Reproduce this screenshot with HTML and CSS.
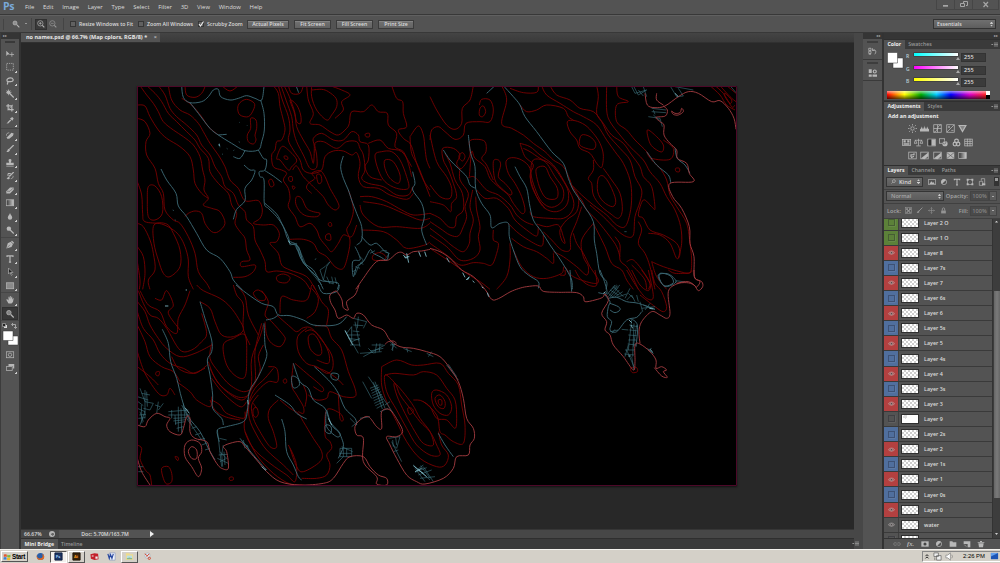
FILE: index.html
```html
<!DOCTYPE html>
<html lang="en">
<head>
<meta charset="utf-8">
<title>no names.psd</title>
<link rel="stylesheet" href="styles.css">
</head>
<body>
<svg class="defs" width="0" height="0">
  <defs>
    <symbol id="move" viewBox="0 0 12 12"><path class="f" d="M1 2v7l2-2h3z"/><path class="s" d="M8.5 4v6M5.5 7h6"/></symbol>
    <symbol id="marquee" viewBox="0 0 12 12"><rect class="s" x="1.500" y="1.500" width="9" height="9" stroke-dasharray="1.8 1.2"/></symbol>
    <symbol id="lasso" viewBox="0 0 12 12"><path class="s w" d="M3 8C0 4 4 2 7 2s5 4 1 5-5-1-5 1 0 2-1 3"/></symbol>
    <symbol id="wand" viewBox="0 0 12 12"><circle class="f" cx="4" cy="4" r="2.3"/><path class="s" d="M4 0v8M0 4h8M1.500 1.500l5 5M6.500 1.500l-5 5"/><path class="s w" d="M5 5l6 6"/></symbol>
    <symbol id="crop" viewBox="0 0 12 12"><path class="s w" d="M3.500 1v7.500H11M1 3.500h7.500V11"/><path class="s" d="M3 9l7-7"/></symbol>
    <symbol id="dropper" viewBox="0 0 12 12"><path class="s" d="M2 10l5-5"/><path class="f" d="M6 3l3 3 2-3-2-2z"/><path class="s w" d="M3 9l4-4"/></symbol>
    <symbol id="heal" viewBox="0 0 12 12"><path class="f" d="M2 8l6-6 3 1-1 3-5 4H2z"/><path class="s" d="M1 6c0-3 2-4 4-4"/></symbol>
    <symbol id="brush" viewBox="0 0 12 12"><path class="s w" d="M5 7l6-6"/><path class="f" d="M1 10c2 0 1-3 3-4l2 2c-1 2-3 3-5 2z"/></symbol>
    <symbol id="stamp" viewBox="0 0 12 12"><path class="f" d="M4 3a2 2 0 0 1 4 0L7 6h4v3H1V6h4zM1 10h10v1H1z"/></symbol>
    <symbol id="history" viewBox="0 0 12 12"><path class="s w" d="M5 7l6-6M3 3h4M2 5h3"/><path class="f" d="M1 10c2 0 1-2 3-3l2 2c-1 2-3 2-5 1z"/><path class="s" d="M7 10c2 0 4-2 3-4"/></symbol>
    <symbol id="eraser" viewBox="0 0 12 12"><path class="f" d="M1 8l5-5h5v3l-5 5H1z"/><path class="d" d="M2 8h4l4-4"/></symbol>
    <symbol id="gradient" viewBox="0 0 12 12"><rect fill="url(#gg)" stroke="#b5b5b5" x="1" y="2" width="10" height="8"/></symbol>
    <symbol id="drop" viewBox="0 0 12 12"><path class="f" d="M6 1c1 3 3 4 3 6a3 3 0 0 1-6 0c0-2 2-3 3-6z"/></symbol>
    <symbol id="dodge" viewBox="0 0 12 12"><circle class="f" cx="4.500" cy="4.500" r="3"/><path class="s w" d="M6 6l5 5"/></symbol>
    <symbol id="pen" viewBox="0 0 12 12"><path class="f" d="M1 11l2-7 4-2 3 3-2 4z"/><path class="d" d="M2 10l4-4"/><path class="s w" d="M8 1l3 3"/></symbol>
    <symbol id="type" viewBox="0 0 12 12"><path class="s w" d="M2 3.500V2h8v1.500M6 2v9M4.500 10.500h3"/></symbol>
    <symbol id="arrow" viewBox="0 0 12 12"><path fill="#222" stroke="#aaa" d="M4 1v8l2-2 2 4 1-1-2-3h3z"/></symbol>
    <symbol id="rect" viewBox="0 0 12 12"><rect fill="#8a8a8a" stroke="#b5b5b5" x="1" y="2" width="10" height="8"/></symbol>
    <symbol id="hand" viewBox="0 0 12 12"><path class="f" d="M4 11L1 6l1-1 2 2V2h1v3l1-4h1v4l1-3h1v4l1-2h1L10 9l-2 2z"/></symbol>
    <symbol id="zoom" viewBox="0 0 12 12"><circle class="f" cx="4.500" cy="4.500" r="3" fill-opacity=".6"/><circle class="s" cx="4.500" cy="4.500" r="3"/><path class="s w" d="M7 7l4 4"/></symbol>
    <symbol id="zin" viewBox="0 0 12 12"><circle class="s" cx="5" cy="5" r="4"/><path class="s" d="M3 5h4M5 3v4"/><path class="s w" d="M8 8l3 3"/></symbol>
    <symbol id="zout" viewBox="0 0 12 12"><circle class="s" cx="5" cy="5" r="4"/><path class="s" d="M3 5h4"/><path class="s w" d="M8 8l3 3"/></symbol>
    <symbol id="mask" viewBox="0 0 12 12"><rect class="s" x="1" y="2" width="10" height="8"/><circle class="s" cx="6" cy="6" r="2.300"/></symbol>
    <symbol id="screen" viewBox="0 0 12 12"><path class="f" d="M4 1h8v6h-2V4H4z"/><rect class="s" x="1" y="4.500" width="8" height="5"/></symbol>
    <symbol id="eye" viewBox="0 0 14 10"><path fill="none" stroke="#bdb5b5" stroke-width="1.200" d="M1 6C3 1 11 1 13 6 10 9 4 9 1 6z"/><circle fill="#3a3030" stroke="#c8c8c8" cx="7" cy="5.500" r="2"/></symbol>
    <symbol id="sun" viewBox="0 0 12 12"><circle class="s" cx="6" cy="6" r="2.300"/><path class="s" d="M6 0v2M6 10v2M0 6h2M10 6h2M1.500 1.500L3 3M9 9l1.500 1.500M10.500 1.500L9 3M1.500 10.500L3 9"/></symbol>
    <symbol id="levels" viewBox="0 0 12 12"><path class="f" d="M0 10V6l1 1 1-4 1 4 1-3 1 3 1-5 1 5 1-3 1 3 1-4 1 4 1-1v4z"/></symbol>
    <symbol id="curves" viewBox="0 0 12 12"><rect class="s" x="1" y="1" width="10" height="10"/><path class="s" d="M1 11c6-1 4-9 10-10M1 6h10M6 1v10"/></symbol>
    <symbol id="expo" viewBox="0 0 12 12"><rect class="s" x="1" y="1" width="10" height="10"/><path class="s" d="M1 11L11 1M2.500 4h3M4 2.500v3M7 8.500h3"/></symbol>
    <symbol id="vib" viewBox="0 0 12 12"><path class="f" fill-opacity=".5" d="M1.500 2h9L6 10z"/><path class="s w" d="M1.500 2h9L6 10z"/></symbol>
    <symbol id="hue" viewBox="0 0 12 12"><rect class="s" x="0.500" y="2" width="11" height="8"/><path class="f" d="M2 3h3v3H2zM7 3h3v3H7zM2 7h8v2H2z"/></symbol>
    <symbol id="balance" viewBox="0 0 12 12"><path class="s" d="M6 1v9M3 10.500h6M1 3h10M0 7l2-4 2 4zM8 7l2-4 2 4z"/></symbol>
    <symbol id="bw" viewBox="0 0 12 12"><rect class="s" x="1" y="1.500" width="10" height="9"/><path fill="#333" d="M2 2h4v8H2z"/><path class="f" d="M6 2h5v8H6z"/></symbol>
    <symbol id="photo" viewBox="0 0 12 12"><rect class="s" x="0.500" y="1" width="7" height="6"/><circle class="f" cx="8" cy="7.500" r="3.500"/><circle class="d" cx="7" cy="6" r="2"/></symbol>
    <symbol id="mixer" viewBox="0 0 12 12"><circle class="s w" cx="6" cy="4" r="2.500"/><circle class="s w" cx="4" cy="8" r="2.500"/><circle class="s w" cx="8" cy="8" r="2.500"/></symbol>
    <symbol id="grid" viewBox="0 0 12 12"><rect class="s" x="1" y="1.500" width="10" height="9"/><path class="s" d="M1 4.500h10M1 7.500h10M4.500 1v10M8 1v10"/></symbol>
    <symbol id="invert" viewBox="0 0 12 12"><rect class="s" x="1" y="1.500" width="10" height="9"/><path class="s w" d="M4 8V5h4V3M4 9l4-2"/></symbol>
    <symbol id="diag" viewBox="0 0 12 12"><rect class="s" x="1" y="1.500" width="10" height="9"/><path class="f" d="M1 10L11 2v5l-5 4z"/></symbol>
    <symbol id="sel" viewBox="0 0 12 12"><rect class="f" x="1" y="1.500" width="10" height="9"/><path class="d" d="M1 2l5 4 5-4M1 10l5-4 5 4"/></symbol>
    <symbol id="pic" viewBox="0 0 12 12"><rect class="s" x="1" y="2" width="10" height="8"/><path class="f" d="M2 9l3-4 2 2 1-1 2 3z"/></symbol>
    <symbol id="half" viewBox="0 0 12 12"><circle class="s" cx="6" cy="6" r="4"/><path class="f" d="M3 9A4 4 0 0 1 9 3z"/></symbol>
    <symbol id="frame" viewBox="0 0 12 12"><rect class="s" x="2.500" y="2.500" width="7" height="7"/><path class="f" d="M1 1h3v3H1zM8 1h3v3H8zM1 8h3v3H1zM8 8h3v3H8z"/></symbol>
    <symbol id="smart" viewBox="0 0 12 12"><path class="s" d="M2 5h5v6H2zM5 4V1h5v7H8"/><path class="f" d="M6 8h5v3H6z"/></symbol>
    <symbol id="checker" viewBox="0 0 12 12"><rect class="s" x="1" y="1" width="10" height="10"/><path class="f" d="M2 2h3v3H2zM7 2h3v3H7zM4 5h4v3H4zM2 8h3v2H2zM7 8h3v2H7z"/></symbol>
    <symbol id="cross" viewBox="0 0 12 12"><path class="s" d="M6 1v10M1 6h10M4.500 2.500L6 1l1.500 1.500M4.500 9.500L6 11l1.500-1.500M2.500 4.500L1 6l1.500 1.500M9.500 4.500L11 6 9.500 7.500"/></symbol>
    <symbol id="lock" viewBox="0 0 12 12"><path class="f" d="M2 6h8v5H2z"/><path class="s w" d="M4 6V3c0-2 4-2 4 0v3"/></symbol>
    <symbol id="link" viewBox="0 0 12 12"><path class="s" d="M5 4H3a2 2 0 0 0 0 4h2M7 4h2a2 2 0 0 1 0 4H7M4 6h4"/></symbol>
    <symbol id="addmask" viewBox="0 0 12 12"><rect class="f" x="0.500" y="2" width="11" height="8"/><circle fill="#444" cx="6" cy="6" r="2.300"/></symbol>
    <symbol id="folder" viewBox="0 0 12 12"><path class="f" d="M1 2h4l1 1.500h5V10H1z"/></symbol>
    <symbol id="page" viewBox="0 0 12 12"><path class="f" d="M1 2h10v9H7V6H1z"/><path class="s" d="M2 7l3 3"/></symbol>
    <symbol id="trash" viewBox="0 0 12 12"><path class="f" d="M2 5h8l-1 6H3zM1 3h10v1H1zM4.500 1.500h3V3h-3z"/></symbol>
    <symbol id="flyout" viewBox="0 0 12 8"><path class="f" d="M0 3h4L2 5z"/><path class="s" d="M5 1.500h7M5 4h7M5 6.500h7"/></symbol>
    <linearGradient id="gg"><stop stop-color="#333"/><stop offset="1" stop-color="#ccc"/></linearGradient>
  </defs>
</svg>

<div class="app">
  <header class="menubar">
    <div class="logo">Ps</div>
    <nav class="menus"><span>File</span><span>Edit</span><span>Image</span><span>Layer</span><span>Type</span><span>Select</span><span>Filter</span><span>3D</span><span>View</span><span>Window</span><span>Help</span></nav>
    <div class="winbtns">
      <svg viewBox="0 0 15 9"><path fill="#a5a5a5" d="M5 5h5v1.700H5z"/></svg>
      <svg viewBox="0 0 15 9"><path fill="none" stroke="#a5a5a5" d="M7.500 3V1.500h4v4H10M4.500 3.500h4v3h-4z"/></svg>
      <svg class="close" viewBox="0 0 24 9"><path fill="none" stroke="#a5a5a5" stroke-width="1.200" d="M10 2l4.500 5M14.500 2L10 7"/></svg>
    </div>
  </header>

  <div class="options">
    <i class="grip"></i>
    <svg class="ic cur"><use href="#zoom"/></svg><i class="caret"></i><i class="sep"></i>
    <span class="zbtn on"><svg class="ic"><use href="#zin"/></svg></span>
    <span class="zbtn off"><svg class="ic"><use href="#zout"/></svg></span><i class="sep s2"></i>
    <label class="chk c1"><i></i><span>Resize Windows to Fit</span></label>
    <label class="chk c2"><i></i><span>Zoom All Windows</span></label>
    <label class="chk c3"><i><svg viewBox="0 0 6 6"><path fill="none" stroke="#eee" stroke-width="1.100" d="M1 3l1.500 2L5.500.5"/></svg></i><span>Scrubby Zoom</span></label>
    <span class="btn b1">Actual Pixels</span><span class="btn b2">Fit Screen</span><span class="btn b3">Fill Screen</span><span class="btn b4">Print Size</span>
    <span class="workspace">Essentials<b class="updn"></b></span>
  </div>

  <main class="work">
    <aside class="tools">
      <div class="striphead">▸▸</div>
      <div class="gripbar"></div>
      <div class="group"><svg class="plain"><use href="#move"/></svg><svg><use href="#marquee"/></svg><svg><use href="#lasso"/></svg><svg><use href="#wand"/></svg><svg><use href="#crop"/></svg><svg><use href="#dropper"/></svg></div>
      <div class="group"><svg><use href="#heal"/></svg><svg><use href="#brush"/></svg><svg><use href="#stamp"/></svg><svg><use href="#history"/></svg><svg><use href="#eraser"/></svg><svg><use href="#gradient"/></svg><svg><use href="#drop"/></svg><svg><use href="#dodge"/></svg></div>
      <div class="group"><svg><use href="#pen"/></svg><svg><use href="#type"/></svg><svg><use href="#arrow"/></svg><svg><use href="#rect"/></svg></div>
      <div class="group"><svg><use href="#hand"/></svg><svg class="plain on"><use href="#zoom"/></svg></div>
      <svg class="colors" viewBox="0 0 18 26"><path fill="#ddd" d="M2 3h3v3H2z"/><path fill="#222" stroke="#aaa" stroke-width=".7" d="M.5 1.500h3v3h-3z"/><path fill="none" stroke="#bbb" stroke-width=".8" d="M10 2.500h3.500V6M11 1l-1.500 1.500L11 4M12 5l1.500 1.500L15 5"/><path fill="#fff" stroke="#333" stroke-width=".5" d="M6 14h10v9H6z"/><path fill="#fff" stroke="#333" stroke-width=".5" d="M1 9h10v9.500H1z"/></svg>
      <div class="group last"><svg class="plain"><use href="#mask"/></svg><svg><use href="#screen"/></svg></div>
    </aside>

    <section class="doc">
      <div class="tabs"><div class="tab">no names.psd @ 66.7% (Map cplors, RGB/8) *<span>×</span></div></div>
      <div class="canvas">
        <svg id="map" class="map" viewBox="137 86 600 400"></svg>
      </div>
      <div class="status"><span class="pct">66.67%</span><i class="globe"></i><span class="size">Doc: 5.70M/163.7M</span><i class="play"></i></div>
      <div class="bottabs"><span class="on">Mini Bridge</span><span>Timeline</span><svg class="fly"><use href="#flyout"/></svg></div>
    </section>

    <aside class="icondock">
      <div class="striphead r">◂◂</div>
      <div class="dockcell"><i></i><svg viewBox="0 0 12 12"><path class="s" d="M1 1h3v3H1zM1 5h3v3H1zM1 9h3M6 4c4-3 6 2 3 5M6 1v3h3"/></svg></div>
      <div class="dockcell"><i></i><svg viewBox="0 0 12 12"><path class="f" d="M1 1h4v5H1zM1 8h4v3H1zM6 8h6v3H6z"/><circle class="s w" cx="9" cy="4" r="2"/></svg></div>
      <div class="dockrest"></div>
    </aside>

    <aside class="panels">
      <div class="striphead r">▸▸</div>
      <div class="ptabs"><span class="on">Color</span><span>Swatches</span><svg class="fly"><use href="#flyout"/></svg></div>
      <div class="color">
        <div class="crow">
          <svg class="fgbg" viewBox="0 0 18 18"><path fill="#fff" stroke="#333" stroke-width=".5" d="M6 6h10v10H6z"/><path fill="#fff" stroke="#333" stroke-width=".5" d="M.5.5h10V11H.5z"/></svg>
          <div class="sliders">
            <div><b>R</b><i class="sl c"></i><em>255</em></div>
            <div><b>G</b><i class="sl m"></i><em>255</em></div>
            <div><b>B</b><i class="sl y"></i><em>255</em></div>
          </div>
        </div>
        <div class="spectrum"></div>
      </div>
      <div class="ptabs"><span class="on">Adjustments</span><span>Styles</span><svg class="fly"><use href="#flyout"/></svg></div>
      <div class="adjust">
        <div class="title">Add an adjustment</div>
        <div class="icons"><svg><use href="#sun"/></svg><svg><use href="#levels"/></svg><svg><use href="#curves"/></svg><svg><use href="#expo"/></svg><svg><use href="#vib"/></svg></div>
        <div class="icons"><svg><use href="#hue"/></svg><svg><use href="#balance"/></svg><svg><use href="#bw"/></svg><svg><use href="#photo"/></svg><svg><use href="#mixer"/></svg><svg><use href="#grid"/></svg></div>
        <div class="icons"><svg><use href="#invert"/></svg><svg><use href="#diag"/></svg><svg><use href="#diag"/></svg><svg><use href="#sel"/></svg><svg><use href="#gradient"/></svg></div>
      </div>
      <div class="ptabs lay"><span class="on">Layers</span><span>Channels</span><span>Paths</span><svg class="fly"><use href="#flyout"/></svg></div>
      <div class="lrow filter"><span class="drop kind"><svg viewBox="0 0 12 12"><circle class="s w" cx="7" cy="5" r="3.500"/><path class="s w" d="M4.500 7.500L1 11"/></svg>Kind<b class="updn"></b></span><svg><use href="#pic"/></svg><svg><use href="#half"/></svg><svg><use href="#type"/></svg><svg><use href="#frame"/></svg><svg><use href="#smart"/></svg><i class="switch"></i></div>
      <div class="lrow dim"><span class="drop mode">Normal<b class="updn"></b></span><span class="lab">Opacity:</span><span class="num">100%</span><span class="dd"></span></div>
      <div class="lrow dim"><span class="lk">Lock:</span><svg><use href="#checker"/></svg><svg><use href="#brush"/></svg><svg><use href="#cross"/></svg><svg><use href="#lock"/></svg><span class="lab">Fill:</span><span class="num">100%</span><span class="dd"></span></div>
      <div class="layers">
        <div class="list" id="layers"></div>
        <div class="scroll"><i class="up"></i><div class="thumb"></div><i class="dn"></i></div>
      </div>
      <div class="lfoot"><svg class="dimmed"><use href="#link"/></svg><span class="fx">fx.</span><svg><use href="#addmask"/></svg><svg><use href="#half"/></svg><svg><use href="#folder"/></svg><svg><use href="#page"/></svg><svg><use href="#trash"/></svg></div>
    </aside>
  </main>

  <footer class="taskbar">
    <div class="start"><svg viewBox="0 0 10 9"><path fill="#e2562c" d="M1 1.500q2-1 3.700 0V4.500q-2-1-3.700 0z"/><path fill="#7fb83c" d="M5.300 1.800q2 1 4 0V4.700q-2 1-4 0z"/><path fill="#3e80cf" d="M.7 5q2-1 3.700 0V8q-2-1-3.700 0z"/><path fill="#f3b92b" d="M5 5.300q2 1 4 0V8.100q-2 1-4 0z"/></svg>Start</div>
    <div class="task"><svg viewBox="0 0 10 10"><circle cx="5" cy="5" r="4" fill="#2a5fa8"/><path fill="#e66a1f" d="M1 3c0 5 4 5 6 3 1-1 0-3 0-4 4 3 2 7-2 7S0 6 1 3z"/></svg></div>
    <div class="task active"><svg viewBox="0 0 10 10"><path fill="#1b3563" stroke="#0d1c3b" d="M1 1h8v8H1z"/><text x="2" y="7" fill="#9cc8f5" class="lt">Ps</text></svg></div>
    <div class="task raised"><svg viewBox="0 0 10 10"><path fill="#38220a" stroke="#1d1205" d="M1 1h8v8H1z"/><text x="2.200" y="7" fill="#f79a1e" class="lt">Ai</text></svg></div>
    <div class="task"><svg viewBox="0 0 10 10"><path fill="#c3202b" d="M.5 2.500L5 1.500l4 .5.500 6L5 9 1 7.500z"/><path fill="#eee" d="M6 5h2.500v2.500H6zM2 4h2v1H2z"/></svg></div>
    <div class="task"><svg viewBox="0 0 10 10"><path fill="#f2f5fb" stroke="#7188b9" stroke-width=".6" d="M3 1h6v8H3z"/><path fill="none" stroke="#2848a0" stroke-width="1.300" d="M1 2l1.500 5L4 3l1.500 4L7 2"/></svg></div>
    <div class="task raised"><svg viewBox="0 0 10 10"><path fill="#f0dc8a" d="M1 1.500h4v1h4V9H1z"/><path fill="#b8dfe8" d="M2 4h6v4H2z"/><path fill="#8ab88e" d="M2 7l3-1 3 1v1H2z"/></svg></div>
    <div class="task"><svg viewBox="0 0 10 10"><circle cx="5" cy="4" r="3" fill="#dfe8ef" stroke="#8fa4b5" stroke-width=".5"/><path fill="none" stroke="#d0442c" stroke-width="1.100" d="M2 2l3 2.500M7 2L4 5"/><circle cx="7" cy="7" r="1.300" fill="none" stroke="#d0442c"/></svg></div>
    <div class="tray">
      <svg viewBox="0 0 8 10"><path fill="none" stroke="#222" stroke-width="1.300" d="M2 4.500l2-2 2 2M2 7.500l2-2 2 2"/></svg>
      <svg viewBox="0 0 10 10"><path fill="#eee" stroke="#555" stroke-width=".7" d="M1 1h5v4H1zM4 4h5v5H4zM2 6v3"/></svg>
      <svg viewBox="0 0 10 10"><path fill="#fff" stroke="#777" stroke-width=".7" d="M1 3.500h2l3-2.500v8L3 6.500H1z"/><path fill="none" stroke="#777" stroke-width=".7" d="M7.500 3q1.500 2 0 4"/></svg>
      <span>2:26 PM</span>
      <svg class="desk" viewBox="0 0 10 10"><path fill="#1c55b5" d="M1 1h8v7H1z"/><path fill="#62a0ee" d="M1 1h8L1 5z"/></svg>
    </div>
  </footer>
</div>
<script src="map.js"></script>
</body>
</html>
```
FILE: styles.css
```css
* { box-sizing: border-box; }
html, body { margin: 0; }
body { width: 1000px; height: 563px; overflow: hidden; background: #535353; font: 5.6px/8px "Open Sans", "Noto Sans", sans-serif; color: #dcdcdc; }
i, em { font-style: normal; }
.defs { position: absolute; }
.s { fill: none; stroke: #b8b8b8; stroke-width: 1; }
.s.w { stroke-width: 1.600; }
.f { fill: #b8b8b8; }
.d { fill: none; stroke: #555; stroke-width: .8; }
.app { display: flex; flex-direction: column; width: 1000px; height: 563px; }

.menubar { display: flex; height: 15px; background: #535353; border-bottom: 1px solid #383838; }
.logo { width: 25px; padding: 0 0 0 3px; font: bold 10.500px/13px "Open Sans", sans-serif; color: #79a8d8; letter-spacing: -.3px; }
.menus { display: flex; gap: 8.700px; font-size: 5.900px; line-height: 14.500px; flex: 1; }
.winbtns { display: flex; height: 10px; margin-right: 1px; border: 1px solid #464646; border-top: 0; }
.winbtns svg { width: 18px; height: 9px; border-right: 1px solid #464646; }
.winbtns .close { width: 25px; border: 0; }

.options { display: flex; align-items: center; height: 18px; background: #535353; border-top: 1px solid #606060; border-bottom: 1px solid #383838; font-weight: 600; font-size: 5.200px; }
.grip { width: 1px; height: 11px; margin-left: 3px; background: #444; }
.ic { width: 8px; height: 8px; }
.cur { margin-left: 8px; }
.caret { margin-left: 5px; border: 1.500px solid transparent; border-top-color: #ddd; }
.sep { width: 1px; height: 12px; margin: 0 3px 0 4px; background: #444; }
.sep.s2 { margin: 0 6px 0 4px; }
.zbtn { display: grid; place-items: center; width: 12px; height: 11px; }
.zbtn.on { background: #3a3a3a; border: 1px solid #303030; }
.zbtn.off { opacity: .7; }
.chk { display: flex; align-items: center; gap: 3px; white-space: nowrap; }
.chk i { display: grid; width: 6px; height: 6px; border: 1px solid #363636; background: #616161; }
.chk svg { width: 6px; height: 6px; margin: -1px; }
.c1 { width: 68px; } .c2 { width: 60px; } .c3 { width: 49px; }
.btn { display: grid; place-items: center; height: 9px; margin-right: 5px; border: 1px solid #3b3b3b; background: linear-gradient(#727272, #626262); box-shadow: inset 0 1px #828282; line-height: 7px; }
.b1 { width: 42px; } .b2, .b3 { width: 37px; } .b4 { width: 36px; }
.workspace { display: flex; align-items: center; justify-content: space-between; width: 63px; height: 10px; margin: 0 4px 0 auto; padding: 0 2px 0 3px; border: 1px solid #333; background: linear-gradient(#707070, #5d5d5d); font-weight: 600; }
.updn { width: 3px; height: 5px; background: linear-gradient(#ccc 0 2px, transparent 2px 3px, #ccc 3px); clip-path: polygon(50% 0, 100% 38%, 100% 62%, 50% 100%, 0 62%, 0 38%); }

.work { display: flex; height: 516px; }
.striphead { flex: none; height: 6px; padding-left: 2px; background: #353535; color: #aaa; font: 4px/6px "DejaVu Sans", sans-serif; }
.striphead.r { text-align: right; padding-right: 2px; }
.tools { width: 21px; background: #535353; border-left: 1px solid #3c3c3c; border-right: 2px solid #333; }
.gripbar { width: 10px; height: 2px; margin: 2px 0 3.500px 4px; background: #393939; }
.group { display: flex; flex-direction: column; border-bottom: 1px solid #464646; margin-bottom: .3px; }
.group svg { width: 16px; height: 13.500px; margin: 0 1px; padding: 2.300px 3.500px; background: linear-gradient(135deg, transparent 50%, #ccc 50%) 13px 10.500px / 2px 2px no-repeat; }
.group svg.plain { background: none; }
.group svg.on { background: #383838; outline: 1px solid #303030; outline-offset: -1px; }
.group.last { border: 0; }
.colors { display: block; width: 18px; height: 26px; margin: 0 0 0 .5px; }

.doc { display: flex; flex-direction: column; width: 842px; border-right: 9px solid #474747; }
.tabs { height: 10px; background: linear-gradient(#444, #3a3a3a); border-bottom: 1px solid #303030; }
.tab { display: flex; justify-content: space-between; width: 139px; height: 9px; padding: 0 3px 0 5px; background: #535353; font-size: 5.500px; line-height: 9.500px; font-weight: 700; color: #e6e6e6; }
.tab span { color: #bbb; }
.canvas { flex: 1; padding: 43px 0 0 116px; background: #282828; }
.map { display: block; width: 600px; height: 400px; background: #000; box-shadow: 0 1px 2px #111; }
.map g { fill: none; stroke-width: 1; stroke-linejoin: round; }
.contour { stroke: #740000; }
.coast { stroke: #a03a3e; }
.river { stroke: #3c6874; }
.street { stroke: #3e7480; }
.glow { stroke: #7ab0bc; }
.status { display: flex; align-items: center; height: 9px; background: #474747; border-top: 1px solid #363636; font-weight: 600; font-size: 5.200px; }
.pct { width: 28px; padding-left: 3px; }
.globe { width: 6px; height: 6px; border-radius: 50%; background: radial-gradient(circle at 60% 55%, #666 22%, #b5b5b5 32%); }
.size { width: 92px; height: 8px; margin-left: 4px; text-align: center; background: #535353; }
.play { width: 4px; height: 6px; margin-left: -1px; background: #eee; clip-path: polygon(0 0, 100% 50%, 0 100%); }
.bottabs, .ptabs { display: flex; height: 11px; background: #3a3a3a; border-top: 1px solid #2f2f2f; font-size: 5.200px; line-height: 10px; font-weight: 600; color: #999; }
.bottabs span, .ptabs span { padding: 0 3.500px; }
.bottabs .on, .ptabs .on { background: #535353; color: #eee; font-weight: 700; }
.bottabs .fly { margin-right: -5px; }
.fly { width: 7px; height: 5px; margin: 2px 2px 0 auto; }

.icondock { display: flex; flex-direction: column; width: 21px; border-right: 2px solid #333; }
.dockcell { height: 21px; padding-top: 1px; border-bottom: 1px solid #3a3a3a; background: #535353; }
.dockcell i { display: block; width: 11px; height: 2px; margin: 1px 0 0 4px; background: #3d3d3d; }
.dockcell svg { display: block; width: 9px; height: 10px; margin: 4px 0 0 5px; }
.dockrest { flex: 1; background: #535353; }

.panels { display: flex; flex-direction: column; width: 116px; }
.panels .ptabs { flex: none; height: 10px; line-height: 9px; }
.color { height: 52px; padding: 3px 3px 0; border-bottom: 1px solid #3a3a3a; }
.crow { display: flex; height: 39px; }
.fgbg { width: 18px; height: 18px; }
.sliders { display: grid; height: 36px; margin-left: 1px; gap: 3.500px; align-content: start; }
.sliders div { display: flex; height: 9px; }
.sliders b { width: 8px; padding-top: 1px; font-size: 5px; line-height: 7px; font-weight: 600; color: #b9cdd4; }
.sl { width: 44px; height: 3px; margin: 1px 3px 0 0; box-shadow: 0 0 0 .5px #333; position: relative; }
.sl::after { content: ""; position: absolute; right: -2px; top: 4px; border: 2px solid transparent; border-top: 0; border-bottom: 3px solid #aaa; }
.sl.c { background: linear-gradient(90deg, #0ff, #fff); } .sl.m { background: linear-gradient(90deg, #f0f, #fff); } .sl.y { background: linear-gradient(90deg, #ff0, #fff); }
.sliders em { width: 25px; height: 9px; margin-top: 1px; padding-left: 2px; background: #3b3b3b; border: 1px solid #333; line-height: 7.500px; font-weight: 600; }
.spectrum { width: 103px; height: 8px; background: linear-gradient(#fff 50%, #000 50%) 100% 0 / 4px 8px no-repeat, linear-gradient(rgba(255,255,255,.55), transparent 45%, rgba(0,0,0,.65)), linear-gradient(90deg, #f00, #ff0 17%, #0a0 33%, #0cf 48%, #00f 62%, #d0c 80%, #f22 96%); }
.adjust { height: 54px; display: flex; flex-direction: column; align-items: center; gap: 5.700px; }
.adjust .title { width: 100%; height: 7px; padding: 1px 4px 0; font-weight: 700; font-size: 5.300px; color: #eee; }
.icons { display: flex; gap: 3.600px; height: 8.200px; margin-right: 9px; }
.icons svg { width: 9px; height: 9px; }
.lrow { display: flex; align-items: center; flex: none; height: 14.500px; border-bottom: 1px solid #404040; font-weight: 600; }
.drop { display: flex; align-items: center; height: 10px; padding: 0 2px 0 4px; margin-left: 2px; border: 1px solid #353535; background: linear-gradient(#696969, #5c5c5c); line-height: 8px; }
.drop .updn { margin-left: auto; }
.kind { width: 37px; }
.filter .kind svg { width: 5px; height: 5px; margin: 0 3px 0 0; }
.mode { width: 58px; }
.filter svg { width: 8px; height: 8px; margin-left: 4.700px; }
.switch { width: 5px; height: 9px; margin-left: 8px; background: linear-gradient(#999 40%, #333 40%); border: 1px solid #333; }
.dim { color: #a6a6a6; }
.dim svg { width: 7px; height: 7px; margin-left: 4.700px; opacity: .65; }
.lk { margin-left: 3px; width: 13px; }
.lab { margin-left: auto; margin-right: 2px; }
.num { width: 19px; height: 10px; border: 1px solid #444; background: #4a4a4a; text-align: center; color: #858585; line-height: 8px; }
.dd { width: 8px; height: 10px; margin-right: 3px; border: 1px solid #444; background: #5b5b5b linear-gradient(#aaa, #aaa) 50% 50% / 2px 1px no-repeat; }
.layers { display: flex; flex: 1; min-height: 0; }
.list { flex: 1; overflow: hidden; }
.layer { display: flex; align-items: center; height: 15.120px; border-bottom: 1px solid #3a3a3a; font-weight: 600; font-size: 5.400px; }
.layer:first-child { margin-top: -3px; }
.vis { display: grid; place-items: center; width: 15px; height: 100%; border-right: 1px solid #3f3f3f; }
.vis svg { width: 7px; height: 5px; }
.vis i { width: 7px; height: 7px; border: 1px solid rgba(30,30,40,.35); box-shadow: .5px .5px rgba(255,255,255,.15); }
.red { background: #b34040; } .blue { background: #506f9e; } .green { background: #5c8139; }
.pv { width: 18px; height: 10px; margin: 0 5px 0 2px; border: 1px solid #303030; background: repeating-conic-gradient(#cfcfcf 0 25%, #fff 0 50%) 0 0 / 4px 4px; }
.pv.art { background: radial-gradient(circle at 20% 20%, #ddd 0 2px, transparent 2px), #fff; }
.scroll { display: flex; flex-direction: column; align-items: center; width: 8px; background: #3d3d3d; border-left: 1px solid #333; }
.scroll .thumb { width: 6px; height: 207px; margin-top: 68px; background: linear-gradient(90deg, #666, #7a7a7a, #666); }
.scroll i { width: 3px; height: 2px; background: #ccc; }
.scroll .up { clip-path: polygon(50% 0, 100% 100%, 0 100%); margin-top: 2px; }
.scroll .dn { clip-path: polygon(0 0, 100% 0, 50% 100%); margin: auto 0 3px; }
.lfoot { display: flex; align-items: center; flex: none; gap: 6px; height: 11px; padding-left: 9px; border-top: 1px solid #333; }
.lfoot svg { width: 8px; height: 8px; }
.dimmed { opacity: .5; }
.fx { width: 8px; font: italic bold 6.500px/8px "Liberation Serif", serif; color: #bbb; }

.taskbar { display: flex; align-items: center; height: 14px; background: #d4d0c8; border-top: 1px solid #f4f2ee; color: #000; }
.start { display: flex; align-items: center; gap: 1px; width: 27px; height: 11px; margin: 0 4.500px 0 1px; padding-left: 1px; border: 1px solid #fff; border-right-color: #555; border-bottom-color: #555; font: bold 6.300px/9px "Liberation Sans", sans-serif; letter-spacing: -.25px; }
.start svg { width: 8px; height: 8px; flex: none; }
.task { display: grid; place-items: center; width: 16.500px; height: 12px; margin-right: 1.300px; border: 1px solid transparent; }
.task svg { width: 9px; height: 9px; }
.task.active { border-color: #555 #fff #fff #555; background: #f2f0ec; }
.task.raised { border-color: #fff #555 #555 #fff; }
.lt { font: bold 4.500px "Open Sans", sans-serif; }
.tray { display: flex; align-items: center; gap: 3px; width: 78px; height: 11px; margin-left: auto; padding-left: 1px; border: 1px solid #888; border-right: 0; border-bottom-color: #fff; font: 5.900px/9px "Liberation Sans", sans-serif; }
.tray svg { width: 9px; height: 9px; }
.tray svg:first-child { width: 6px; }
.tray span { margin: 0 2px 0 6px; white-space: nowrap; }
```
FILE: map.js
```js
const NS = "http://www.w3.org/2000/svg";
const map = document.getElementById("map");

// Each sheet is digitised at three units per pixel from its own origin.
// A trailing "z" closes the line.
const sheets = [
  {
    x: 130, y: 80,
    contour: [
      "30,17 50,45 70,70 85,95 100,125 130,150 160,170 190,195 210,230 218,270 225,300 222,330 235,355 220,375 245,385 270,395 285,430 265,455 245,455 225,430 215,400 195,393 175,400 165,410",
      "50,17 75,40 95,65 115,100 140,125 170,155 195,180 210,205 235,235 240,275 265,310 295,340 305,375 320,400 315,430 330,455 345,475 350,510 360,540 335,545 335,560 375,555 370,575 345,590 310,592",
      "85,17 105,45 120,85 140,110 170,135 200,165 215,195 240,225 255,260 275,290 285,320 310,340 325,375 345,395 350,420 370,440 375,480 390,510 405,545 410,575 440,573 480,580 520,600 540,628",
      "115,17 125,60 150,90 180,105 205,130 220,155 240,190 265,225 285,260 300,300 325,325 345,362 385,362 397,390 390,415 370,430 400,435 430,435 448,460 440,485 420,490 445,520 455,555 480,570 530,590 555,628",
      "155,55 185,75 215,110 235,140 265,165",
      "22,75 45,78 60,110 85,150 110,175 150,200 180,230 190,270 195,310 215,340 235,355",
      "22,115 45,125 60,160 48,185 50,225 75,265 85,310 100,340 105,390 130,420 150,430 175,470 195,520 205,575 230,610 240,628",
      "22,305 35,345 38,400 45,425 95,432 130,450 150,470 165,500 175,540 175,590 190,628",
      "55,320 75,318 95,350 97,400 75,420 55,410 52,360 z",
      "72,435 110,432 130,460 150,510 150,560 120,590 100,580 85,540 72,490 z",
      "22,430 40,440 60,480 70,520 75,570 55,600 60,628",
      "22,500 40,530 45,580 38,628", "22,545 30,600 28,628",
      "165,17 170,45 195,52 215,40 225,20", "275,17 300,33 325,17",
      "330,68 350,58 373,70 370,90 355,110 330,105 323,85 z",
      "362,115 378,120 380,145 375,165 378,180 370,192 355,185 352,165 362,145 z",
      "430,17 445,40 450,80 460,120 465,150 455,180 440,185 435,210 425,225 430,260 455,270 470,280 460,300 475,325 480,355 475,380 495,410 510,440 540,430 560,450 570,475 590,500 605,515 625,490 640,465 665,470 680,435",
      "445,17 457,60 475,110 480,150 475,180 490,210 510,240 520,270 545,280 575,270 585,230 610,213 640,213 665,225 680,218 690,250 685,290 700,320 745,325 780,345 830,358 850,340",
      "453,17 468,60 485,110 490,150 500,185 520,225 540,265 560,262 560,225 555,190 580,185 620,205 650,185 680,185 690,205 700,225 705,270 695,295 715,310 760,320 800,345 835,345 848,320",
      "462,17 478,50 495,100 500,140 520,180 540,215 550,250 553,200 550,175 575,160 610,180 640,180 665,155 685,165 690,185 715,195 715,240 705,260 720,290 755,300",
      "475,17 485,40 510,40 520,17",
      "480,60 500,75 512,105 512,130 500,125 492,95 z",
      "530,17 535,60 550,100 540,130 570,135 600,155 625,165 650,145 658,130 665,95 700,95 725,75 745,95 772,100 775,135 800,160 795,200 820,215 835,250 845,290",
      "545,17 545,50 560,90 590,120 605,105 620,80 618,55 595,35 575,28 545,30",
      "600,17 635,30 660,45 635,65 640,90 615,115",
      "785,17 800,55 818,65 820,100 830,140 805,150 820,175 840,190 850,215 860,250 880,300 900,330",
      "840,170 865,138 880,165 885,205 890,240 900,265", "840,170 845,220 865,260 900,350",
      "755,215 785,215 810,240 830,290 835,325 800,325 765,305 745,270 735,225 z",
      "765,240 790,245 810,285 805,310 780,295 765,265 z",
      "715,190 750,180 775,205 815,215 845,260",
      "690,350 725,350 770,365 815,390 850,405 900,400", "690,375 700,405 745,440 800,440 870,445 900,430", "700,365 760,375 820,400 870,420 900,415",
      "695,450 760,455 800,480 830,505 885,495 900,485",
      "455,200 475,210 500,240 485,260 475,270 450,240 440,235 z",
      "463,228 472,230 473,238 464,236 z", "476,292 486,290 487,303 478,303 z", "416,303 425,298 432,315 422,320 z",
      "487,318 495,322 490,328 z", "595,430 603,428 605,438 597,438 z", "588,465 600,462 602,480 588,478 z",
      "706,162 718,160 718,170 708,170 z",
      "488,270 500,258 520,290 545,315 560,330 580,350 595,375 615,390 627,380 620,360 600,325 585,290 570,272 545,280 555,295 535,310 530,325 545,340",
      "560,285 572,285 575,305 565,310 z",
      "500,350 515,355 530,385 550,395 570,400 560,410 530,408 510,395 497,370 z",
      "655,330 665,360 670,395 660,430 650,450 660,480 655,520 640,565 615,560 590,530 565,515 550,490 520,478 480,478",
      "440,590 460,582 480,592 470,608 445,605 z",
      "730,525 750,518 768,530 760,540 730,540 z"
    ],
    coast: ["677,628 700,595 725,560 745,542 775,540 800,520 815,517 830,525 850,515 875,513 900,508"],
    river: [
      "155,17 160,52 180,68 215,65 235,50 250,30 265,28 272,50 300,60 325,55 350,47 375,55 395,60 402,20",
      "180,68 205,100 240,145 265,165 305,190 345,212 385,210 395,185 403,150 402,100 392,60",
      "265,165 290,163", "385,210 400,235 410,240 405,270 388,275 390,290 402,300 403,370 415,385 440,410 460,440 475,480 500,495 510,530 530,560 560,590 580,628",
      "405,370 440,402 455,430 475,470 480,490 505,500 520,545 550,570 570,600 600,605 625,610 622,628",
      "342,255 360,270 375,272 365,300 345,325 345,362 320,388 310,418", "405,272 430,288 455,307",
      "310,230 330,235 345,212", "93,267 110,300 138,340 145,378 170,410 200,460 230,510 270,535 300,575 310,600 335,628",
      "640,228 632,260 640,295 655,330 665,360 680,400 695,440 695,480 680,495",
      "848,275 855,310 848,330 875,370 883,410 875,450 890,495", "498,17 506,38",
      "695,470 720,495 740,490 765,515 775,520 770,540 750,530 730,520 720,510 700,545 680,560 670,590 668,545 690,540 685,520 675,500"
    ],
    street: ["555,540 558,535 M128,390 132,392 M135,418 137,422 M268,190 270,202 M326,185 330,187 M290,205 293,207 M310,212 313,210 M350,135 352,137 M328,127 330,128 M276,222 279,223",
      "580,600 590,560 600,545 585,560 570,570 580,600 610,612 M590,590 600,612 M605,590 610,612 M615,592 620,612",
      "475,480 480,495 500,490 500,505 515,530 M505,500 530,560 575,615 M495,495 520,550 560,590",
      "675,585 685,560 700,540 M668,575 678,570 M676,560 690,565 M690,548 700,553 M690,530 700,540 M720,520 735,512 M750,518 755,512 770,512 M768,515 778,520 770,532"],
    glow: ["820,525 828,535 835,528 M830,520 836,548 M824,532 838,530 M866,515 872,530 M884,515 889,530 M475,482 480,490 M267,192 268,198"]
  },
  {
    x: 430, y: 80,
    contour: [
      "0,50 20,90 50,135 75,148 95,130 97,85 120,60 130,17",
      "0,180 5,150 25,140 45,155 75,178 100,165 108,130 150,125 180,125 190,90 180,60 155,58 148,75",
      "150,85 160,78 167,95 158,110 148,105 z", "88,225 98,218 105,230 98,243 88,235 z",
      "0,315 30,350 60,355 65,325 50,290 20,245 0,165",
      "0,365 40,375 62,395 65,370 80,350 70,310 55,270 40,240 38,205 70,205 90,225 80,250 95,265 120,225 118,185 140,178 165,185 168,215 155,235 170,255 190,300",
      "0,400 30,415 55,440 75,440 80,410 100,390 97,340 75,300 60,250 45,220",
      "0,425 30,445 60,465 85,468 100,440 110,410 105,380 115,340 90,300 90,265",
      "0,445 40,475 70,500 100,515 118,490 120,460 130,420 120,380 128,330",
      "0,465 50,500 90,540 130,535 150,510 145,470 150,440 140,390 137,350",
      "0,490 50,525 90,555 130,548 160,550 185,555 200,520 205,490 190,480 190,450",
      "0,505 60,545 110,580 150,605 180,628",
      "118,290 125,215 135,235 165,260 180,295 205,320 235,345 250,370 275,400 285,390 275,350 255,310 235,280 228,245 245,233 275,240 300,265 303,310 320,350 345,385",
      "190,245 205,240 212,255 205,290 225,310 245,335 240,345 215,325 195,300 z",
      "115,293 135,292 170,330 205,345 240,375 260,405 285,425 310,435",
      "140,330 165,355 200,355 235,385 255,420 290,450 320,468 325,440",
      "235,430 260,455 295,480 335,498 340,465", "245,475 280,500 320,515 350,535 370,550 370,520",
      "240,490 240,540 230,590 200,628", "250,510 275,560 310,590 350,595 395,580 403,560 430,590 490,610 505,600 480,560 460,520 440,490 430,460",
      "215,17 230,60 215,130 245,145 280,165 310,190 345,215 370,240 400,260 420,300 430,330 455,360 470,390 500,420 540,470 560,500 570,530",
      "240,25 280,38 320,37 325,17", "270,75 290,95 320,90 350,75 400,85 415,110 430,120",
      "270,190 300,200 330,225 370,255 400,300 430,360 425,395 400,415 360,415 310,410 300,395",
      "270,190 285,230 310,255 300,290 320,350 345,385 380,395 410,375 415,335 395,295 365,255 330,235 300,215 280,205",
      "320,265 345,260 360,290 382,325 380,355 350,355 332,330 320,290 z",
      "310,240 345,245 375,290 400,330 395,365 365,382 335,365 315,325 303,280 z",
      "320,432 350,440 385,435 400,470 405,490 395,480 390,450 410,420 440,395 445,350 420,310",
      "340,455 365,480 395,510 420,510 422,470 440,425 455,380", "370,515 400,530 440,560 470,585 475,560 460,530 455,480 490,430",
      "335,17 350,45 390,70 430,95 460,110 500,135 530,180 555,215 580,250 600,300 605,350 600,400 585,440 560,435 530,405 490,375 455,345 420,310",
      "360,17 380,45 420,60 450,85 490,95 515,125 535,165 570,205 600,240 615,290 635,330 630,365 615,410 610,465 590,470 560,450 520,410 480,375",
      "412,125 435,122 465,135 490,160 510,190 520,225 515,262 500,250 480,220 450,205 440,180 420,155 z",
      "455,165 480,170 497,190 490,208 460,202 448,190 z",
      "520,265 545,300 570,340 577,390 565,415 540,400 510,375 490,345 485,310 475,295 490,270 490,240",
      "505,295 520,288 540,315 557,360 548,380 520,365 503,335 z",
      "500,17 505,50 500,100 520,130 545,165 580,190 605,225 630,260 640,290 665,320 675,385 665,380 640,360 625,405 640,415 660,450 700,465 740,490 750,520 740,535 720,490 690,465 655,460",
      "530,17 530,90 540,125 570,165 600,200 640,240 660,275 690,310 710,350 735,390 752,440 755,490 745,535",
      "560,17 565,50 595,65 560,75 560,125 590,150 615,180 650,215 665,240 690,265 710,300 720,345 740,380 770,430 780,490",
      "652,150 680,170 700,195 697,215 680,210 660,190 z", "650,215 665,235 720,238 730,205 700,180",
      "737,265 748,265 748,275 738,274 z",
      "555,470 570,495 570,540 590,560 605,585 625,628", "490,430 525,500 545,550 575,570 590,600 610,628",
      "590,545 610,540 640,575 660,610 655,628", "605,555 625,575 645,600 650,628", "625,425 635,450 625,490 645,520 660,560 675,628",
      "665,545 700,560 750,575 780,578 785,540 780,490", "665,545 680,590 710,628",
      "840,17 870,45 890,75 915,90", "855,17 880,40 905,80 915,75", "870,17 900,50 918,65", "885,40 905,60 900,70 885,50 z", "890,17 918,40"
    ],
    coast: [
      "0,505 30,515 60,535 95,570 130,590 165,628 185,658 205,656 240,636 265,626 290,620 325,618 340,634 390,637",
      "645,40 652,75 675,83 705,78 745,50 775,35 805,40 845,65 870,62 895,85 912,115 918,148",
      "680,40 680,60 700,75", "700,78 712,90 706,108 678,112 690,125 702,135 702,165 720,190 740,210 742,235 770,250 778,280 790,305 720,310 728,350 755,385 778,440 780,490 792,530 793,590 810,605 800,622",
      "725,93 735,100 750,98 755,85 760,95 745,105 730,103 z", "740,610 775,605 800,622"
    ],
    river: [
      "220,17 250,50 270,75 285,110 320,155 365,215 400,250 415,295 430,330 460,375 490,425 493,480 500,520 510,580 530,605 528,628",
      "255,260 270,290 290,325 298,370 310,420 335,455 360,495 385,530 410,570 425,600 427,628",
      "115,165 122,220 135,260 137,325 155,370 180,405 185,443 210,430 235,430 238,470 250,510 270,560 295,585 325,605 325,625",
      "40,210 60,240 85,265 110,290 120,315 137,325", "650,215 680,255 715,285 722,308", "195,17 170,40",
      "685,585 715,582 738,605 710,620 695,610 z", "735,205 742,235 765,255 780,280"
    ],
    street: ["605,20 615,40 650,30 625,45 610,17 M640,20 650,50 M625,30 640,48 M720,17 740,50 760,48 M745,25 760,48 M735,20 790,30 M665,85 708,90 M665,95 708,98 M670,90 675,103 M655,110 690,115 697,140 M670,105 690,122 M583,455 590,455 M738,602 765,606 M545,628 560,615 M555,628 570,615 M900,17 918,38"],
    glow: ["50,533 58,547 M98,578 105,592 M108,600 118,590 M118,592 112,600 M128,602 133,608 M735,40 745,50 M155,620 160,625 M172,638 176,650"]
  },
  {
    x: 130, y: 285,
    contour: [
      "25,17 40,55 60,90 85,100 110,130 150,195 185,195 215,170 230,145 215,85",
      "22,50 45,80 60,120 85,160 110,190 150,215 195,205 245,180",
      "22,80 40,130 70,165 90,205 120,235 160,250 195,265 232,240", "22,120 45,170 60,215 95,245 130,260 150,290",
      "30,17 55,60 90,80 110,125 140,145 145,100 165,60 180,17", "75,40 95,45 110,17 130,60 115,85 150,135",
      "125,215 145,250 185,265 225,250", "140,290 180,320 200,345 240,365 245,335", "22,200 45,265 85,325 110,330 120,310 135,330",
      "78,262 88,260 86,272 78,270 z", "22,245 60,275 85,300",
      "210,50 240,70 255,110 275,150 310,155 340,135 325,100 300,65 270,40 220,17 200,0",
      "280,180 310,160 345,150 350,220 345,275 320,275 290,240 z",
      "245,175 240,220 265,260 300,300 345,320 375,290 375,200 395,115",
      "235,230 255,280 290,320 335,345 360,320 390,260 385,215 400,180",
      "245,280 280,325 330,365 350,350", "240,250 270,300 320,335 355,330 365,290 365,220 390,155 400,120",
      "245,345 270,360 290,385 340,400 345,380", "240,345 255,375 285,395 330,405",
      "310,0 320,30 340,60 340,130 360,180", "320,0 345,35 355,90 385,150",
      "370,25 385,15 405,30 405,45 385,45 z", "395,17 415,50 405,90 425,110 460,150 465,165 450,185 425,175 410,150 405,110",
      "450,85 455,35 490,45 530,45 545,0", "545,10 565,40 555,80 530,100", "550,0 575,50 595,75 590,120",
      "440,90 480,125 500,140 520,128 545,130 575,165 605,210 608,250 590,265 560,245 530,235 505,200 503,155 530,130",
      "535,155 552,148 570,175 575,205 560,210 540,190 z", "525,140 545,135 570,155 595,200 595,235 560,225",
      "555,123 590,125 605,160 635,195 655,260 675,310 675,335 640,335 600,320 590,340 560,345 535,330",
      "495,235 530,265 560,290 580,310 575,320 550,305", "555,245 590,260 620,280 640,300",
      "415,245 440,250 443,290 415,290 385,315 360,350 345,400 345,440 370,490 420,535 470,570 495,590 500,545 490,510 475,480",
      "430,250 405,280 375,310 358,350 358,400 380,450 410,495 460,540 490,570",
      "445,345 420,370 415,400 430,440 440,485 420,485 390,440 370,400 365,360 385,330",
      "450,345 480,370 505,385 520,410 550,460 575,500 570,530 520,560 500,545 480,490",
      "345,440 380,510 430,565 480,597 520,600", "515,580 560,580 590,570 600,540 590,510 605,490 600,470 585,450 590,375 630,385 640,405 630,400 625,330",
      "490,235 485,300 500,330 520,365 520,385 505,380", "520,300 530,330 525,365", "460,285 468,282 470,292 462,294 z", "370,372 380,368 385,385 378,397 370,390 z",
      "370,355 380,370", "755,245 800,225 845,240 880,240 930,235 955,265 985,300 995,360 1005,420 1000,475 970,470 945,450 930,440 920,390 880,350 850,345",
      "755,245 755,300 770,350 800,410 830,470 870,520 920,545 945,540 955,510 935,480 925,440",
      "765,270 795,265 850,270 880,260 920,270 950,310 975,345 980,400 975,430 950,405 920,400 900,365 880,350",
      "765,270 770,320 800,375 830,430 860,480 900,510 930,510 920,480 900,440 870,410 840,370 810,330 795,295 z",
      "795,295 800,330 825,385 855,440 880,475 910,480 900,440 870,400 845,355 z",
      "905,325 920,315 950,330 965,365 955,390 930,385 910,360 z", "915,340 930,330 945,350 942,370 925,365 z", "925,345 935,345 935,360 927,358 z",
      "833,370 845,370 850,380 838,388 z",
      "95,550 115,545 125,565 125,590 110,597 100,580 z", "298,578 308,576 310,584 300,586 z", "135,515 145,518 143,527 z",
      "22,480 35,490 30,520 40,545 50,560 60,570 65,600"
    ],
    coast: [
      "22,420 45,425 55,405 80,385 105,395 120,400 110,420 120,440 150,450 160,430 170,395 180,400 180,440 195,460 230,470 240,500 260,535 275,550 295,550 290,500 280,485 300,475 330,470 345,485 380,525 410,560 450,590 510,600 580,595 610,580 640,535 660,515 700,515 720,545 745,570 770,580 770,600 740,597 740,575 700,530 700,460 680,450 675,425 690,405 715,395 740,425 755,430 755,380 780,375 805,410 818,440 800,455 770,455 780,480 800,520 830,570 860,590 885,597 940,580 970,550 980,515 1015,510 1020,480 1033,460 1030,430 1010,400 1000,340 985,290 960,250 930,215 890,200 850,190 810,185 780,165 760,135 725,120 700,90 680,85 670,100 650,90 625,100 615,75 602,52 600,30 618,18 626,28",
      "687,0 675,30 650,50 655,75 640,68 636,45 626,26", "165,480 185,465 210,475 215,500 205,520 215,550 205,575 185,545 165,515 z",
      "185,485 200,495 200,520 185,520 175,500 z", "22,520 35,560 60,600", "765,178 775,170 790,168 800,175"
    ],
    river: [
      "318,0 350,25 395,55 430,65 445,90 480,92 520,105 550,120 600,122 630,115 650,95", "408,105 430,100 445,90",
      "210,50 225,100 245,165 245,200 232,225 240,270 248,330 248,370 275,400 280,420",
      "97,133 115,175 122,230 140,280 155,340 175,395 210,440 235,490 255,525",
      "402,115 405,180 410,215 385,275 358,320 352,380 340,410 290,425 262,435 268,470",
      "490,235 510,290 535,310 550,345 585,370 600,410 630,445 620,455 590,425 588,380", "435,330 480,360 500,385 530,402",
      "455,402 465,440 470,500 490,540 505,575 515,585", "553,245 600,290 625,325 645,370 675,400 680,420",
      "590,375 605,420 625,440 635,460 640,485 625,520", "925,445 945,480 970,515", "330,460 370,510 410,555",
      "587,420 603,425 602,445 587,440 z", "605,265 625,268 622,285 605,280 z", "485,275 503,280 508,300 490,308 z", "565,0 580,25 620,20 628,0"
    ],
    street: [
      "30,310 45,350 70,355 60,375 40,370 M22,335 55,345 M45,315 45,400 M22,370 45,380 30,420 M30,380 40,410 M25,400 45,398 M85,350 80,385 M100,355 85,375 M75,360 90,365 M22,545 40,545 M25,560 40,560 M35,325 60,330 M50,320 52,365 M24,350 40,362 M28,390 48,388 M34,360 36,415",
      "115,380 175,375 M115,390 180,390 M130,400 170,398 M145,365 145,440 M160,355 165,400 M155,360 185,420 M125,375 125,400 M170,400 215,465 M185,430 200,425 M195,450 212,445 M205,465 225,460 M225,495 240,490 M135,415 165,410 M140,430 160,425 M153,370 155,445 M135,390 137,420 M130,408 168,404 M215,480 232,474",
      "262,435 275,545 M270,500 290,520 M262,520 295,535 M268,460 290,465 M280,480 275,510 M270,530 290,520 M340,465 345,490 M350,480 360,500 M335,470 355,485 M275,505 278,545 M282,500 285,540 M266,510 292,508",
      "645,135 685,205 M650,145 665,125 665,170 690,160 M675,110 690,185 M655,160 690,165 M660,180 690,180 M670,100 710,110 700,130 M690,205 755,200 M700,215 765,180 M715,190 730,205 M725,180 760,180 M740,175 735,205 M780,170 800,190 M785,195 795,175 M820,190 845,200 M890,205 910,215 M895,215 905,200 M652,150 690,150 M668,138 688,140 M750,175 748,200 M720,198 760,190 M685,95 682,130 M670,120 700,122 M780,180 798,178 M788,170 788,198 M830,188 833,202",
      "715,275 790,385 M735,290 765,370 M720,310 745,300 M725,325 750,312 M728,340 756,328 M733,355 760,342 M740,370 762,358 M698,290 725,340 M765,360 780,350 M750,380 775,370 M730,292 757,372 M723,317 748,306 M727,332 753,320 M731,347 758,335 M736,362 761,350",
      "630,490 665,490 665,515 630,515 z M640,490 640,515 M650,490 650,515 M620,535 640,515 M660,400 680,420 M665,425 685,410 M690,400 720,395 M635,485 668,500 M628,505 665,505",
      "775,460 810,455 800,490 790,480 M785,470 815,530 M790,500 805,495 M788,465 790,485 M797,458 800,480",
      "850,540 900,585 M860,555 880,540 M865,570 905,555 M870,580 915,575 M880,545 910,590 M855,550 885,590 M950,240 985,285 M955,238 980,275 M855,562 890,548 M872,542 900,580"
    ],
    glow: ["850,542 890,575 M865,555 880,565 M855,560 875,550 M645,137 668,180 M353,345 355,358 M165,368 178,385 M105,63 115,63 M595,400 605,420 M395,545 408,556 M167,15 171,15"]
  },
  {
    x: 560, y: 270,
    contour: ["0,15 15,15 15,0", "45,0 60,25 85,45 110,45 105,0", "200,0 230,50 260,85 280,80 265,0", "215,0 240,45 265,62 270,40 245,0",
      "275,0 285,40 305,65 320,110 310,125 285,110 240,75", "325,0 345,10 390,8 395,0", "215,293 230,293 232,305 218,308 212,300 z"],
    coast: ["0,67 50,68 70,80 75,95 105,90 128,82 135,72 145,92 125,130 140,155 135,180 150,195 160,225 190,260 220,300 225,275 225,225 240,222 270,245 288,270 288,295 305,290 320,300 310,305 322,322 305,318 283,293",
      "240,220 237,185 245,155 275,125 300,135 320,145 330,130 325,65 350,42 380,38 402,45 415,62 428,50 425,35 405,25 402,0"],
    river: ["30,0 35,65", "120,0 135,40 140,70 115,68", "135,75 150,95 145,110 142,140 155,155 150,180 170,185 200,150 230,142 245,125",
      "150,100 175,110 180,120 165,128 150,120", "300,10 330,17 340,38 315,48 300,30 z", "145,85 170,82 200,95 235,100 285,118", "210,145 232,165 228,230", "345,38 350,35"],
    street: [
      "140,75 165,45 M145,80 172,47 M150,82 175,52 M157,82 178,60 M163,82 188,65 M170,82 200,72 M150,60 175,75 M160,50 190,80 M145,70 160,82 M195,85 210,55 M200,90 215,75 225,95 M230,75 235,95 M205,70 220,85 M240,95 248,125 M250,105 285,118 M245,115 285,110 M255,120 270,100 M150,185 175,180 M155,190 165,178 M185,178 205,180",
      "215,150 205,240 M222,160 218,260 M230,165 220,230 M208,165 232,170 M208,180 230,182 M205,195 230,197 M205,210 230,210 M203,222 228,225 M195,240 225,240 M193,252 222,255 M200,240 222,290 M205,225 195,260 M215,260 222,300 M262,235 280,250 265,240 275,235"
    ],
    glow: ["130,70 137,65 M207,150 215,158 M213,165 218,175 M268,115 280,117 M270,238 278,246 M205,258 212,258"]
  }
];

// Catmull-Rom smoothing, written out as cubic segments.
function line(text) {
  const closed = text.endsWith("z");
  const p = text.replace("z", "").trim().split(/\s+/).map(s => s.split(",").map(Number));
  const n = p.length;
  const at = i => closed ? p[(i + n) % n] : p[Math.max(0, Math.min(n - 1, i))];
  let d = "M" + p[0];
  for (let i = 0; i < (closed ? n : n - 1); i++) {
    const [a, b, c, e] = [at(i - 1), at(i), at(i + 1), at(i + 2)];
    d += "C" + [b[0] + (c[0] - a[0]) / 6, b[1] + (c[1] - a[1]) / 6, c[0] - (e[0] - b[0]) / 6, c[1] - (e[1] - b[1]) / 6, c[0], c[1]].map(v => v.toFixed(1));
  }
  return d;
}

function draw(d, parent) {
  const path = document.createElementNS(NS, "path");
  path.setAttribute("d", d);
  parent.appendChild(path);
}

const widths = { contour: 2.8, river: 2.8, street: 1.8, coast: 2.8, glow: 2.8 };
for (const kind of Object.keys(widths)) {
  for (const s of sheets) {
    const g = document.createElementNS(NS, "g");
    g.setAttribute("class", kind);
    g.setAttribute("transform", `translate(${s.x} ${s.y}) scale(.33333)`);
    g.style.strokeWidth = widths[kind];
    const raw = kind === "street" || kind === "glow";
    for (const t of s[kind]) draw(raw ? "M" + t : line(t), g);
    map.appendChild(g);
  }
}
const edge = document.createElementNS(NS, "g");
edge.style.stroke = "#4c0828";
draw("M137 86.500H736.500V485.500H137.500V86", edge);
map.appendChild(edge);

const rows = ["2 O:green", "1 O:green", "8:red", "7s:blue", "7:red", "6s:blue", "6:red", "5s:blue", "5:red", "4s:blue", "4:red",
  "3s:blue", "3:red", "9:none", "2s:blue", "2:red", "1s:blue", "1:red", "0s:blue", "0:red", "water:eye", " :none"];
document.getElementById("layers").innerHTML = rows.map(r => {
  const [name, tone] = r.split(":");
  const seen = tone === "red" || tone === "eye";
  const label = name === "water" || name === " " ? name : "Layer " + name;
  return `<div class="layer"><span class="vis ${tone}">${seen ? '<svg><use href="#eye"/></svg>' : "<i></i>"}</span><span class="pv${name === "9" ? " art" : ""}"></span>${label}</div>`;
}).join("");
```
